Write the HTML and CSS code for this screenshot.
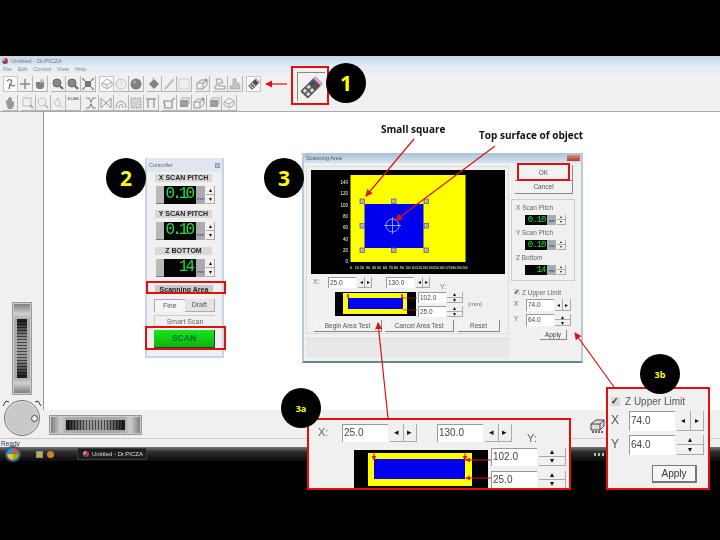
FILE: index.html
```html
<!DOCTYPE html>
<html lang="en">
<head>
  <meta charset="UTF-8" />
  <title>Dr.PICZA scanning area</title>
  <link rel="stylesheet" href="styles.css">
</head>
<body>
  <svg class="defs" width="0" height="0">
    <symbol id="pointer" viewBox="0 0 12 12"><path d="M2 3c3-3 6 0 4 2s2 4 4 2M5 6l-1 5" fill="none" stroke="#777" stroke-width="1.3"/></symbol>
    <symbol id="move" viewBox="0 0 12 12"><path d="M6 1v10M1 6h10" stroke="#888" stroke-width="1.5"/></symbol>
    <symbol id="cup" viewBox="0 0 12 12"><path d="M2 4h8v5l-2 2H4L2 9z" fill="#808080"/><circle cx="8" cy="3" r="2" fill="#bbb"/></symbol>
    <symbol id="zoom" viewBox="0 0 12 12"><circle cx="5" cy="5" r="4" fill="#888" stroke="#666"/><path d="M8 8l3 3" stroke="#666" stroke-width="2"/></symbol>
    <symbol id="fit" viewBox="0 0 12 12"><rect x="3" y="3" width="6" height="6" fill="#777"/><path d="M0 0l3 3M12 0L9 3M0 12l3-3M12 12L9 9" stroke="#888" stroke-width="1.5"/></symbol>
    <symbol id="cube" viewBox="0 0 12 12"><path d="M1 5l5-4 5 3v4l-5 3-5-3zM1 5l5 2 5-3M6 7v4" fill="none" stroke="#aaa"/></symbol>
    <symbol id="ball" viewBox="0 0 12 12"><circle cx="6" cy="6" r="5" fill="none" stroke="#c4c4c4"/><circle cx="4.5" cy="4.5" r="2.5" fill="none" stroke="#d4d4d4"/></symbol>
    <symbol id="solid" viewBox="0 0 12 12"><circle cx="6" cy="6" r="5.5" fill="#808080"/><circle cx="4.5" cy="4" r="1.5" fill="#aaa"/></symbol>
    <symbol id="paint" viewBox="0 0 12 12"><path d="M1 6l5-5 5 5-5 5z" fill="#808080"/><path d="M6 1l-2-1" stroke="#999"/></symbol>
    <symbol id="brush" viewBox="0 0 12 12"><path d="M1 11L10 1l1 1L3 11z" fill="#bbb" stroke="#aaa" stroke-width=".5"/></symbol>
    <symbol id="plane" viewBox="0 0 12 12"><rect x="1" y="1" width="10" height="10" fill="none" stroke="#d0d0d0"/></symbol>
    <symbol id="box" viewBox="0 0 12 12"><path d="M1 5l4-3h6v5l-4 4H1zM1 5h6v6M7 5l4-3" fill="none" stroke="#999"/><circle cx="10" cy="2" r="1.5" fill="#999"/></symbol>
    <symbol id="scan" viewBox="0 0 12 12"><path d="M2 1h5l2 4H5v3h6v3H1V8h2V4z" fill="none" stroke="#999"/></symbol>
    <symbol id="tower" viewBox="0 0 12 12"><path d="M4 1h3v4h3v3h1v3H1V8h3z" fill="#c4c4c4" stroke="#999" stroke-width=".6"/></symbol>
    <symbol id="remote" viewBox="0 0 24 24"><g transform="rotate(45 12 12)"><rect x="6.5" y="1" width="11" height="22" rx="1" fill="#555"/><rect x="6.5" y="1" width="11" height="3" fill="#e59be5"/><circle cx="9.500" cy="8" r="1.400" fill="#223ac0"/><circle cx="14.500" cy="8" r="1.400" fill="#d52020"/><rect x="8" y="12" width="3.200" height="3.500" fill="#ddd"/><rect x="12.800" y="12" width="3.200" height="3.500" fill="#ddd"/><rect x="8" y="17.500" width="3.200" height="3.500" fill="#ddd"/><rect x="12.800" y="17.500" width="3.200" height="3.500" fill="#ddd"/></g></symbol>
    <symbol id="hand" viewBox="0 0 12 12"><path d="M2 6V3l1 0 1 1V1h1v3-4h2v4-3h1v4l1-1 1 1v4l-2 3H4z" fill="#999"/></symbol>
    <symbol id="area" viewBox="0 0 12 12"><rect x="1" y="1" width="8" height="8" fill="none" stroke="#bbb"/><path d="M8 8l3 3" stroke="#999" stroke-width="1.4"/></symbol>
    <symbol id="round" viewBox="0 0 12 12"><circle cx="5" cy="5" r="4" fill="none" stroke="#c4c4c4"/><path d="M8 8l3 3" stroke="#aaa" stroke-width="1.2"/></symbol>
    <symbol id="poly" viewBox="0 0 12 12"><path d="M2 6l4-5 2 5-2 4zM8 8l3 3" fill="none" stroke="#bbb"/></symbol>
    <symbol id="xcut" viewBox="0 0 12 12"><path d="M1 1h3l2 4 2-4h3M1 11h3l2-4 2 4h3" fill="none" stroke="#888" stroke-width="1.2"/></symbol>
    <symbol id="bow" viewBox="0 0 12 12"><path d="M1 1l5 5-5 5zM11 1L6 6l5 5z" fill="none" stroke="#999"/></symbol>
    <symbol id="arch" viewBox="0 0 12 12"><path d="M1 11C1 2 11 2 11 11M4 11c0-5 4-5 4 0" fill="none" stroke="#999"/></symbol>
    <symbol id="grid" viewBox="0 0 12 12"><rect x="1" y="1" width="10" height="10" fill="#d4d4d4" stroke="#888" stroke-dasharray="1 1"/></symbol>
    <symbol id="door" viewBox="0 0 12 12"><path d="M1 2h10M3 2v9M9 2v9" fill="none" stroke="#999" stroke-width="1.3"/></symbol>
    <symbol id="tray" viewBox="0 0 12 12"><path d="M1 4h8v7H2zM9 3l3-2" fill="none" stroke="#888" stroke-width="1.2"/></symbol>
    <symbol id="stack" viewBox="0 0 12 12"><rect x="2" y="3" width="8" height="7" fill="#999"/><rect x="4" y="1" width="7" height="6" fill="none" stroke="#aaa"/></symbol>
    <symbol id="drive" viewBox="0 0 16 16"><path d="M1 6l5-4h8v6l-4 4H1z" fill="#ddd" stroke="#444"/><path d="M1 6h9v6M10 6l4-4" fill="none" stroke="#444"/><path d="M2 14h12" stroke="#666" stroke-width="2" stroke-dasharray="2 1"/></symbol>
  </svg>

  <div class="screen">
    <div class="bar-top"></div>

    <div class="app">
      <div class="app-title"><span class="app-logo"></span>Untitled - Dr.PICZA</div>
      <div class="app-menu"><span>File</span><span>Edit</span><span>Control</span><span>View</span><span>Help</span></div>
      <div class="toolbar">
        <div class="tb-row">
          <div class="tb-group">
            <span class="tb on"><svg><use href="#pointer"/></svg></span>
            <span class="tb"><svg><use href="#move"/></svg></span>
            <span class="tb"><svg><use href="#cup"/></svg></span>
          </div>
          <div class="tb-group">
            <span class="tb"><svg><use href="#zoom"/></svg></span>
            <span class="tb"><svg><use href="#zoom"/></svg></span>
            <span class="tb"><svg><use href="#fit"/></svg></span>
          </div>
          <div class="tb-group">
            <span class="tb on"><svg><use href="#cube"/></svg></span>
            <span class="tb"><svg><use href="#ball"/></svg></span>
            <span class="tb"><svg><use href="#solid"/></svg></span>
          </div>
          <div class="tb-group">
            <span class="tb"><svg><use href="#paint"/></svg></span>
            <span class="tb"><svg><use href="#brush"/></svg></span>
            <span class="tb"><svg><use href="#plane"/></svg></span>
          </div>
          <div class="tb-group">
            <span class="tb"><svg><use href="#box"/></svg></span>
          </div>
          <div class="tb-group">
            <span class="tb"><svg><use href="#scan"/></svg></span>
            <span class="tb"><svg><use href="#tower"/></svg></span>
          </div>
          <div class="tb-group">
            <span class="tb on"><svg><use href="#remote"/></svg></span>
          </div>
        </div>
        <div class="tb-row">
          <div class="tb-group">
            <span class="tb"><svg><use href="#hand"/></svg></span>
          </div>
          <div class="tb-group">
            <span class="tb"><svg><use href="#area"/></svg></span>
            <span class="tb"><svg><use href="#round"/></svg></span>
            <span class="tb"><svg><use href="#poly"/></svg></span>
            <span class="tb scan-tb">SCAN</span>
          </div>
          <div class="tb-group">
            <span class="tb"><svg><use href="#xcut"/></svg></span>
            <span class="tb"><svg><use href="#bow"/></svg></span>
            <span class="tb"><svg><use href="#arch"/></svg></span>
            <span class="tb"><svg><use href="#grid"/></svg></span>
            <span class="tb"><svg><use href="#door"/></svg></span>
          </div>
          <div class="tb-group">
            <span class="tb"><svg><use href="#tray"/></svg></span>
            <span class="tb"><svg><use href="#stack"/></svg></span>
            <span class="tb"><svg><use href="#box"/></svg></span>
            <span class="tb"><svg><use href="#stack"/></svg></span>
            <span class="tb"><svg><use href="#cube"/></svg></span>
          </div>
        </div>
      </div>

      <div class="workspace">
        <div class="side-panel">
          <div class="wheel-v"><div class="ribs-v"></div></div>
        </div>
        <div class="canvas"></div>
      </div>

      <div class="bottom-panel">
        <div class="knob">
          <svg class="knob-arrows" width="40" height="12" viewBox="0 0 40 12"><path d="M1 9l3-5 3 1M39 9l-3-5-3 1" fill="none" stroke="#333"/></svg>
          <span class="knob-dot"></span>
        </div>
        <div class="wheel-h"><div class="ribs-h"></div></div>
        <svg class="corner-icon"><use href="#drive"/></svg>
      </div>
      <div class="status">Ready</div>
    </div>

    <div class="taskbar">
      <span class="orb"></span>
      <span class="quick q1"></span>
      <span class="quick q2"></span>
      <span class="task"><span class="app-logo"></span>Untitled - Dr.PICZA</span>
      <span class="tray-dots"></span>
    </div>

    <!-- controller window -->
    <div class="controller">
      <div class="ctl-title"><span>Controller</span><i></i></div>
      <div class="ctl-label">X SCAN PITCH</div>
      <div class="lcd-row">
        <div class="lcd-bezel"></div><div class="lcd">0.10</div><div class="lcd-unit">mm</div>
        <div class="spin-v"><b>▴</b><b>▾</b></div>
      </div>
      <div class="ctl-label">Y SCAN PITCH</div>
      <div class="lcd-row">
        <div class="lcd-bezel"></div><div class="lcd">0.10</div><div class="lcd-unit">mm</div>
        <div class="spin-v"><b>▴</b><b>▾</b></div>
      </div>
      <div class="ctl-label narrow">Z BOTTOM</div>
      <div class="lcd-row">
        <div class="lcd-bezel"></div><div class="lcd">14</div><div class="lcd-unit">mm</div>
        <div class="spin-v"><b>▴</b><b>▾</b></div>
      </div>
      <div class="ctl-area">Scanning Area</div>
      <div class="ctl-tabs"><span class="tab-on">Fine</span><span>Draft</span></div>
      <div class="ctl-smart">Smart Scan</div>
      <div class="ctl-scan">SCAN</div>
    </div>

    <!-- scanning area dialog -->
    <div class="dialog">
      <div class="dlg-title"><span>Scanning Area</span><i></i></div>
      <div class="dlg-body">
        <div class="dlg-left">
          <div class="dlg-frame">
            <svg class="plot" width="194" height="104" viewBox="0 0 194 104">
              <rect width="194" height="104" fill="#000"/>
              <rect x="39.500" y="5" width="115" height="87" fill="#ff0"/>
              <rect x="53.500" y="34" width="59" height="44" fill="#0000f0"/>
              <g class="plot-y" fill="#fff" text-anchor="end">
                <text x="37" y="14">140</text><text x="37" y="25">120</text><text x="37" y="37">100</text><text x="37" y="48">80</text>
                <text x="37" y="59">60</text><text x="37" y="71">40</text><text x="37" y="82">20</text><text x="37" y="93">0</text>
              </g>
              <g class="plot-x" fill="#fff" text-anchor="middle">
                <text x="40" y="99">0</text><text x="46" y="99">10</text><text x="51" y="99">20</text><text x="57" y="99">30</text><text x="63" y="99">40</text>
                <text x="68" y="99">50</text><text x="74" y="99">60</text><text x="80" y="99">70</text><text x="85" y="99">80</text><text x="91" y="99">90</text>
              </g>
              <g class="plot-x wide-x" fill="#fff" text-anchor="middle">
                <text x="97" y="99">100</text><text x="103" y="99">110</text><text x="108.500" y="99">120</text><text x="114" y="99">130</text><text x="120" y="99">140</text>
                <text x="125.500" y="99">150</text><text x="131" y="99">160</text><text x="137" y="99">170</text><text x="142.500" y="99">180</text><text x="148" y="99">190</text><text x="154" y="99">200</text>
              </g>
              <g fill="#b5b5b5" stroke="#555" stroke-width=".7">
                <rect x="49" y="29" width="4.500" height="4.500"/><rect x="80.500" y="29" width="4.500" height="4.500"/><rect x="113" y="29" width="4.500" height="4.500"/>
                <rect x="49" y="53.500" width="4.500" height="4.500"/><rect x="113" y="53.500" width="4.500" height="4.500"/>
                <rect x="49" y="78" width="4.500" height="4.500"/><rect x="80.500" y="78" width="4.500" height="4.500"/><rect x="113" y="78" width="4.500" height="4.500"/>
              </g>
              <g fill="none" stroke="#a8c8ff" stroke-width=".8">
                <circle cx="81.500" cy="55.500" r="6.500"/>
                <path d="M73 55.500h17M81.500 47v17"/>
              </g>
            </svg>
            <div class="xy-row">
              <span class="xy-label">X:</span>
              <span class="field">25.0</span>
              <span class="spin-h"><b>◂</b><b>▸</b></span>
              <span class="field field-second">130.0</span>
              <span class="spin-h"><b>◂</b><b>▸</b></span>
              <span class="xy-label y-label">Y:</span>
            </div>
            <div class="mini-row">
              <svg class="mini" width="81" height="24" viewBox="0 0 81 24">
                <rect width="81" height="24" fill="#000"/>
                <rect x="8" y="1" width="64" height="21" fill="#ff0"/>
                <rect x="13" y="6" width="55" height="11" fill="#0000f0"/>
                <path d="M13 2v4M67 2v4" stroke="#d01010" stroke-width="1.500"/>
              </svg>
              <div class="mini-fields">
                <div class="mini-field"><span class="field">102.0</span><span class="spin-v wide"><b>▴</b><b>▾</b></span></div>
                <div class="mini-field"><span class="field">25.0</span><span class="spin-v wide"><b>▴</b><b>▾</b></span></div>
              </div>
              <span class="mm">(mm)</span>
            </div>
            <div class="dlg-actions">
              <span class="btn begin">Begin Area Test</span>
              <span class="btn cancel-test">Cancel Area Test</span>
              <span class="btn reset">Reset</span>
            </div>
          </div>
          <div class="dlg-status"></div>
        </div>
        <div class="dlg-right">
          <span class="btn ok">OK</span>
          <span class="btn cancel">Cancel</span>
          <div class="pitch-group">
            <div class="pitch-label">X Scan Pitch</div>
            <div class="lcd-row small"><div class="lcd">0.10</div><div class="lcd-unit">mm</div><div class="spin-v"><b>▴</b><b>▾</b></div></div>
            <div class="pitch-label">Y Scan Pitch</div>
            <div class="lcd-row small"><div class="lcd">0.10</div><div class="lcd-unit">mm</div><div class="spin-v"><b>▴</b><b>▾</b></div></div>
            <div class="pitch-label">Z Bottom</div>
            <div class="lcd-row small"><div class="lcd">14</div><div class="lcd-unit">mm</div><div class="spin-v"><b>▴</b><b>▾</b></div></div>
          </div>
          <div class="limit">
            <div class="limit-check"><span class="check">✓</span>Z Upper Limit</div>
            <div class="limit-row"><span>X</span><span class="field">74.0</span><span class="spin-h"><b>◂</b><b>▸</b></span></div>
            <div class="limit-row"><span>Y</span><span class="field">64.0</span><span class="spin-v wide"><b>▴</b><b>▾</b></span></div>
            <span class="btn apply">Apply</span>
          </div>
        </div>
      </div>
    </div>

    <!-- big copy of the dialog's small preview -->
    <div class="zoom-a">
      <div class="za-row">
        <span class="za-label">X:</span>
        <span class="field">25.0</span>
        <span class="spin-h"><b>◂</b><b>▸</b></span>
        <span class="field za-second">130.0</span>
        <span class="spin-h"><b>◂</b><b>▸</b></span>
        <span class="za-label za-y">Y:</span>
      </div>
      <div class="za-preview">
        <div class="za-black"><div class="za-yellow"><div class="za-blue"></div></div></div>
        <div class="za-fields">
          <div class="mini-field"><span class="field">102.0</span><span class="spin-v wide"><b>▴</b><b>▾</b></span></div>
          <div class="mini-field"><span class="field">25.0</span><span class="spin-v wide"><b>▴</b><b>▾</b></span></div>
        </div>
      </div>
    </div>

    <div class="zoom-b">
      <div class="limit-check"><span class="check">✓</span>Z Upper Limit</div>
      <div class="limit-row"><span>X</span><span class="field">74.0</span><span class="spin-h"><b>◂</b><b>▸</b></span></div>
      <div class="limit-row"><span>Y</span><span class="field">64.0</span><span class="spin-v wide"><b>▴</b><b>▾</b></span></div>
      <span class="btn apply">Apply</span>
    </div>

    <!-- annotations -->
    <div class="remote-box"><div class="remote-frame"><svg width="23" height="23"><use href="#remote"/></svg></div></div>
    <div class="red-box rb-area"></div>
    <div class="red-box rb-scan"></div>
    <div class="red-box rb-ok"></div>

    <svg class="arrows" width="720" height="540" viewBox="0 0 720 540">
      <defs>
        <marker id="head" viewBox="0 0 8 8" refX="7" refY="4" markerWidth="6" markerHeight="6" orient="auto"><path d="M0 0L8 4L0 8z" fill="#e01010"/></marker>
        <marker id="head-s" viewBox="0 0 8 8" refX="7" refY="4" markerWidth="5" markerHeight="5" orient="auto"><path d="M0 0L8 4L0 8z" fill="#e01010"/></marker>
      </defs>
      <g stroke="#e01010" fill="none">
        <path d="M287 84L266 84" stroke-width="1.200" marker-end="url(#head)"/>
        <path d="M414 139L366 196" stroke-width="1.200" marker-end="url(#head)"/>
        <path d="M495 146L396 220" stroke-width="1.200" marker-end="url(#head)"/>
        <path d="M388 418L378 323" stroke-width="1.200" marker-end="url(#head)"/>
        <path d="M614 387L575 333" stroke-width="1.200" marker-end="url(#head)"/>
        <path d="M374 452L374 460" stroke-width="1" marker-end="url(#head-s)"/>
        <path d="M465 452L465 460" stroke-width="1" marker-end="url(#head-s)"/>
        <path d="M491 460L466 460" stroke-width="1" marker-end="url(#head-s)"/>
        <path d="M491 478L466 478" stroke-width="1" marker-end="url(#head-s)"/>
        <path d="M417 298L403 298M417 310L403 310" stroke-width=".7"/>
      </g>
    </svg>

    <div class="note note-square">Small square</div>
    <div class="note note-top">Top surface of object</div>

    <div class="num n1">1</div>
    <div class="num n2">2</div>
    <div class="num n3">3</div>
    <div class="num small n3a">3a</div>
    <div class="num small n3b">3b</div>
  </div>
</body>
</html>
```

FILE: styles.css
```css
* { box-sizing: border-box; }
body {
  margin: 0;
  background: #000;
  font-family: 'Liberation Sans', Arial, sans-serif;
}
.defs { position: absolute; }
.screen {
  position: relative;
  width: 720px;
  height: 540px;
  overflow: hidden;
  background: #000;
}
.bar-top { height: 56px; }

/* main app window */
.app { height: 391px; display: flex; flex-direction: column; background: #f0f0f0; filter: blur(.45px); }
.app-title {
  height: 9px;
  display: flex;
  align-items: center;
  gap: 3px;
  padding-left: 2px;
  font-size: 6px;
  color: #777;
  background: linear-gradient(#c4d6e8, #dbe7f2);
}
.app-logo {
  display: inline-block;
  width: 6px;
  height: 6px;
  border-radius: 50%;
  background: conic-gradient(#c33 0 40%, #555 40% 70%, #e8a 70%);
}
.app-menu {
  height: 8px;
  display: flex;
  gap: 6px;
  padding-left: 3px;
  font-size: 5.500px;
  line-height: 8px;
  color: #8a8a8a;
  background: #e6edf5;
}
.toolbar { height: 39px; padding: 3px 0 0 3px; border-bottom: 1px solid #aaa; }
.tb-row { height: 17px; margin-bottom: 2px; display: flex; gap: 3px; }
.tb-group { display: flex; }
.tb {
  width: 15px;
  height: 16px;
  display: flex;
  align-items: center;
  justify-content: center;
  border-right: 1px solid #b5b5b5;
  border-bottom: 1px solid #b5b5b5;
}
.tb.on { background: #fbfbfb; border: 1px solid #c5c5c5; }
.tb svg { width: 12px; height: 12px; }
.scan-tb { font-size: 4px; font-weight: bold; color: #777; align-items: flex-start; padding-top: 1px; }

.workspace { flex: 1; display: flex; }
.side-panel { width: 44px; padding: 190px 0 0 12px; border-right: 1px solid #999; }
.canvas { flex: 1; background: #fff; }

.wheel-v {
  width: 20px;
  height: 93px;
  padding: 16px 4px;
  background: linear-gradient(#777, #d0d0d0 12%, #aaa 18%, #aaa 82%, #d0d0d0 88%, #777);
  border: 1px solid #999;
  box-shadow: inset 0 0 0 1px #ccc;
}
.ribs-v {
  height: 100%;
  background:
    linear-gradient(rgba(0,0,0,.85), rgba(0,0,0,0) 35%, rgba(0,0,0,0) 65%, rgba(0,0,0,.85)),
    repeating-linear-gradient(#999 0 2px, #444 2px 3px);
}
.bottom-panel { height: 28px; display: flex; align-items: flex-start; padding-left: 4px; }
.knob {
  position: relative;
  width: 36px;
  height: 36px;
  margin-top: -10px;
  border-radius: 50%;
  background: #c9c9c9;
  border: 1px solid #777;
  box-shadow: inset 0 0 0 1px #ddd;
}
.knob-arrows { position: absolute; left: -3px; top: -4px; }
.knob-dot {
  position: absolute;
  left: 26px;
  top: 14px;
  width: 7px;
  height: 7px;
  border-radius: 50%;
  background: #eee;
  border: 1px solid #444;
}
.wheel-h {
  width: 93px;
  height: 20px;
  margin: 5px 0 0 9px;
  padding: 4px 16px;
  background: linear-gradient(90deg, #777, #d0d0d0 12%, #aaa 18%, #aaa 82%, #d0d0d0 88%, #777);
  border: 1px solid #999;
  box-shadow: inset 0 0 0 1px #ccc;
}
.ribs-h {
  height: 100%;
  background:
    linear-gradient(90deg, rgba(0,0,0,.85), rgba(0,0,0,0) 35%, rgba(0,0,0,0) 65%, rgba(0,0,0,.85)),
    repeating-linear-gradient(90deg, #999 0 2px, #444 2px 3px);
}
.corner-icon { width: 16px; height: 16px; margin: 8px 0 0 448px; }
.status {
  height: 9px;
  padding-left: 1px;
  font-size: 6.500px;
  line-height: 9px;
  color: #333;
  border-top: 1px solid #ccc;
}

.taskbar {
  height: 14px;
  display: flex;
  align-items: center;
  position: relative;
  background: linear-gradient(#777, #2c2c2c 35%, #0d0d0d);
  filter: blur(.3px);
}
.orb {
  width: 16px;
  height: 16px;
  margin: -1px 0 0 5px;
  border-radius: 50%;
  background: conic-gradient(#e4522b 0 25%, #7fb92f 25% 50%, #f5c018 50% 75%, #2f8fdc 75%);
  border: 2px solid #2c5d86;
}
.quick { width: 7px; height: 7px; }
.q1 { margin-left: 15px; background: #e6a21d; border: 1px solid #4aa3e0; }
.q2 { margin-left: 4px; background: #c9842a; border-radius: 50%; }
.task {
  width: 70px;
  height: 12px;
  margin-left: 23px;
  display: flex;
  align-items: center;
  gap: 3px;
  padding-left: 5px;
  font-size: 6px;
  color: #ddd;
  background: #1d1d1d;
  border: 1px solid #3c3c3c;
  border-radius: 2px;
}
.tray-dots {
  width: 12px;
  height: 3px;
  margin-left: 447px;
  background: repeating-linear-gradient(90deg, #9c9 0 2px, transparent 2px 4px);
}

/* controller */
.controller {
  position: absolute;
  left: 145px;
  top: 158px;
  width: 79px;
  height: 200px;
  padding: 0 7px;
  background: #f0f0f0;
  border: 2px solid #c5d5e8;
  border-top-width: 0;
  filter: blur(.35px);
}
.ctl-title {
  height: 14px;
  margin: 0 -7px;
  padding: 0 2px;
  display: flex;
  align-items: center;
  justify-content: space-between;
  font-size: 5.500px;
  color: #666;
  background: #dfe8f2;
}
.ctl-title i, .dlg-title i { display: block; }
.ctl-title i { width: 5px; height: 5px; background: #bbb; border: 1px solid #999; }
.ctl-label {
  height: 8px;
  margin: 2px 3px 0 1px;
  font-size: 7px;
  line-height: 8px;
  font-weight: bold;
  text-align: center;
  color: #222;
  background: #d8d8d8;
}
.ctl-label.narrow { margin-top: 7px; }
.lcd-row { display: flex; height: 18px; margin: 4px 0 6px 2px; }
.lcd-bezel { width: 8px; background: #b9b9b9; border-bottom: 1px solid #777; }
.lcd {
  width: 32px;
  font-family: 'Liberation Mono', monospace;
  font-size: 16px;
  line-height: 17px;
  letter-spacing: -3px;
  text-align: right;
  padding-right: 4px;
  color: #1be13a;
  background: #050505;
}
.lcd-unit {
  width: 9px;
  padding-top: 10px;
  font-size: 4px;
  text-align: center;
  color: #2a2ab0;
  background: #ababab;
}
.spin-v { width: 9px; margin-left: 1px; display: flex; flex-direction: column; }
.spin-v b, .spin-h b {
  flex: 1;
  min-width: 0;
  min-height: 0;
  overflow: hidden;
  display: flex;
  align-items: center;
  justify-content: center;
  font-size: 6px;
  line-height: 1;
  font-weight: normal;
  color: #111;
  background: #f0f0f0;
  border-right: 1px solid #aaa;
  border-bottom: 1px solid #aaa;
}
.ctl-area {
  height: 9px;
  margin: 8px 2px 0 1px;
  font-size: 7px;
  line-height: 9px;
  font-weight: bold;
  text-align: center;
  color: #222;
  background: #c8c8c8;
  border-bottom: 1px solid #666;
}
.ctl-tabs { display: flex; height: 13px; margin-top: 5px; font-size: 7px; line-height: 12px; color: #555; text-align: center; }
.ctl-tabs span { flex: 1; background: #e4e4e4; border-right: 1px solid #aaa; border-bottom: 1px solid #aaa; }
.ctl-tabs .tab-on { background: #f6f6f6; border: 0; border-left: 1px solid #aaa; border-top: 1px solid #aaa; }
.ctl-smart {
  height: 12px;
  margin-top: 3px;
  font-size: 7px;
  line-height: 12px;
  text-align: center;
  color: #666;
  border: 1px solid #ccc;
  border-right: 0;
  border-bottom: 0;
}
.ctl-scan {
  height: 18px;
  margin-top: 3px;
  font-size: 8.500px;
  line-height: 17px;
  font-weight: bold;
  text-align: center;
  color: #063;
  background: linear-gradient(#17e51b, #0bb50f);
  border-right: 1px solid #333;
  border-bottom: 1px solid #333;
}

/* dialog */
.dialog {
  position: absolute;
  left: 302px;
  top: 153px;
  width: 281px;
  height: 210px;
  background: #f0f0f0;
  border: 2px solid #b6cbdd;
  border-top: 0;
  border-bottom-color: #5c8a98;
  filter: blur(.35px);
}
.dlg-title {
  height: 10px;
  display: flex;
  align-items: center;
  justify-content: space-between;
  padding: 0 1px 0 2px;
  font-size: 5.500px;
  color: #555;
  background: linear-gradient(#a9c2d6, #d5e3ef);
}
.dlg-title i { width: 13px; height: 6px; background: linear-gradient(#e08a78, #b03a2a); }
.dlg-body { display: flex; }
.dlg-left { width: 203px; margin-left: 2px; }
.dlg-frame {
  height: 168px;
  margin-top: 3px;
  padding: 3px 3px 0 4px;
  border: 1px solid #ddd;
}
.plot { display: block; }
.plot-y text, .plot-x text { font-family: 'Liberation Sans', Arial, sans-serif; font-size: 4.500px; }
.plot-x text { font-size: 4px; }
.wide-x text { font-size: 3.200px; }

.field {
  display: block;
  padding: 0 0 0 1px;
  background: #fff;
  color: #444;
  border-left: 1px solid #999;
  border-top: 1px solid #999;
}
.spin-h { display: flex; }
.xy-row { display: flex; height: 11px; margin-top: 3px; font-size: 6.500px; line-height: 9px; }
.xy-row .field { width: 28px; }
.xy-row .spin-h { width: 14px; margin-left: 2px; }
.xy-label { width: 17px; padding-left: 2px; color: #777; font-size: 7px; }
.xy-row .field-second { margin-left: 14px; }
.y-label { margin: 5px 0 0 8px; }
.mini-row { display: flex; margin-top: 4px; height: 25px; }
.mini { display: block; margin-left: 24px; }
.mini-fields { margin-left: 2px; }
.mini-field { display: flex; }
.mini-fields .mini-field { height: 11px; margin-bottom: 3px; font-size: 6.500px; line-height: 9px; }
.mini-fields .field { width: 28px; }
.spin-v.wide { width: 16px; }
.mm { margin: 9px 0 0 5px; font-size: 6px; color: #666; }
.btn {
  display: block;
  text-align: center;
  background: #f2f2f2;
  color: #555;
  border-right: 1px solid #888;
  border-bottom: 1px solid #888;
}
.dlg-actions { display: flex; height: 12px; margin-top: 3px; font-size: 6.500px; line-height: 11px; }
.begin { width: 68px; margin-left: 3px; }
.cancel-test { width: 69px; margin-left: 3px; }
.reset { width: 42px; margin-left: 4px; }
.dlg-status { height: 20px; margin-top: 4px; background: #e8e8e8; border-top: 1px solid #ddd; }

.dlg-right { width: 70px; margin-left: 2px; }
.ok, .cancel { width: 58px; margin-left: 4px; font-size: 6.500px; }
.ok { height: 16px; margin-top: 2px; line-height: 15px; }
.cancel { height: 13px; line-height: 12px; }
.pitch-group {
  width: 64px;
  height: 82px;
  margin-top: 5px;
  padding: 3px 0 0 4px;
  border: 1px solid #ccc;
}
.pitch-label { height: 9px; font-size: 6.500px; line-height: 9px; color: #666; }
.lcd-row.small { height: 10px; margin: 3px 0 3px 9px; width: 41px; }
.lcd-row.small .lcd { width: 23px; font-size: 9px; line-height: 10px; letter-spacing: -1px; padding-right: 2px; }
.lcd-row.small .lcd-unit { width: 9px; padding-top: 4px; font-size: 3.500px; }
.lcd-row.small .spin-v b { font-size: 4px; }
.limit { margin: 7px 0 0 3px; font-size: 6.500px; color: #666; }
.limit-check { display: flex; align-items: center; gap: 2px; height: 8px; }
.check {
  width: 6px;
  height: 6px;
  font-size: 6px;
  line-height: 6px;
  font-weight: bold;
  color: #222;
  background: #d8d8d8;
  overflow: hidden;
}
.limit-row { display: flex; height: 12px; margin-top: 3px; line-height: 10px; }
.limit-row > span:first-child { width: 12px; }
.limit-row .field { width: 28px; }
.limit-row .spin-h, .limit-row .spin-v { width: 16px; margin-left: 1px; }
.apply { width: 27px; height: 10px; margin: 4px 0 0 26px; line-height: 9px; color: #444; }

/* enlarged callouts */
.zoom-a, .zoom-b {
  position: absolute;
  background: #f0f0f0;
  border: 2px solid #e01010;
  overflow: hidden;
  filter: blur(.3px);
}
.zoom-a { left: 307px; top: 418px; width: 264px; height: 72px; padding: 4px 0 0 9px; }
.za-row { display: flex; height: 18px; font-size: 10px; line-height: 15px; }
.za-row .field { width: 46px; }
.za-row .spin-h { width: 27px; margin-left: 2px; }
.za-row b { font-size: 9px; }
.za-label { width: 24px; color: #666; font-size: 11px; padding-top: 1px; }
.za-second { margin-left: 20px; }
.za-y { margin: 6px 0 0 15px; white-space: nowrap; }
.za-preview { display: flex; margin: 8px 0 0 36px; }
.za-black { width: 134px; height: 40px; padding: 3px 0 0 14px; background: #000; }
.za-yellow { width: 104px; height: 33px; padding: 6px 0 0 6px; background: #ff0; }
.za-blue { width: 91px; height: 20px; background: #0000f0; }
.za-fields { margin: -2px 0 0 3px; }
.za-fields .mini-field { height: 18px; margin-bottom: 5px; font-size: 10px; line-height: 16px; }
.za-fields .field { width: 46px; }
.za-fields .spin-v.wide { width: 27px; margin-left: 2px; }
.za-fields b { font-size: 8px; }

.zoom-b { left: 606px; top: 387px; width: 104px; height: 103px; padding: 5px 0 0 3px; font-size: 10px; color: #555; }
.zoom-b .limit-check { height: 14px; gap: 5px; }
.zoom-b .check { width: 9px; height: 9px; font-size: 9px; line-height: 9px; }
.zoom-b .limit-row { height: 20px; margin-top: 4px; line-height: 18px; }
.zoom-b .limit-row:nth-child(2) { margin-top: 3px; }
.zoom-b .limit-row > span:first-child { width: 18px; font-size: 12px; }
.zoom-b .field { width: 46px; font-size: 10px; }
.zoom-b .spin-h, .zoom-b .spin-v { width: 27px; margin-left: 2px; }
.zoom-b b { font-size: 8px; }
.zoom-b .apply { width: 45px; height: 18px; margin: 10px 0 0 41px; line-height: 15px; color: #333; background: #f6f6f6; border: 1px solid #777; border-right-width: 2px; border-bottom-width: 2px; }

/* annotations */
.remote-box {
  position: absolute;
  left: 291px;
  top: 66px;
  width: 38px;
  height: 39px;
  padding: 4px 0 0 4px;
  background: #f2f2f2;
  border: 2px solid #e01010;
}
.remote-frame {
  width: 28px;
  height: 29px;
  padding: 3px 0 0 2px;
  border-left: 1px solid #888;
  border-top: 1px solid #888;
}
.remote-frame svg { display: block; }
.red-box { position: absolute; border: 2px solid #e01010; }
.rb-area { left: 146px; top: 281px; width: 80px; height: 13px; }
.rb-scan { left: 145px; top: 326px; width: 81px; height: 24px; }
.rb-ok { left: 517px; top: 163px; width: 53px; height: 18px; }
.arrows { position: absolute; left: 0; top: 0; }
.note { position: absolute; font-family: 'Open Sans', sans-serif; font-size: 10px; font-weight: bold; color: #111; white-space: nowrap; }
.note-square { left: 381px; top: 122px; }
.note-top { left: 479px; top: 128px; }
.num {
  position: absolute;
  display: flex;
  align-items: center;
  justify-content: center;
  width: 40px;
  height: 40px;
  border-radius: 50%;
  background: #000;
  color: #ff0;
  font-family: 'Open Sans', sans-serif;
  font-size: 21px;
  font-weight: bold;
}
.num.small { font-size: 9px; }
.n1 { left: 326px; top: 63px; }
.n2 { left: 106px; top: 158px; }
.n3 { left: 264px; top: 158px; }
.n3a { left: 281px; top: 388px; }
.n3b { left: 640px; top: 354px; }
```
